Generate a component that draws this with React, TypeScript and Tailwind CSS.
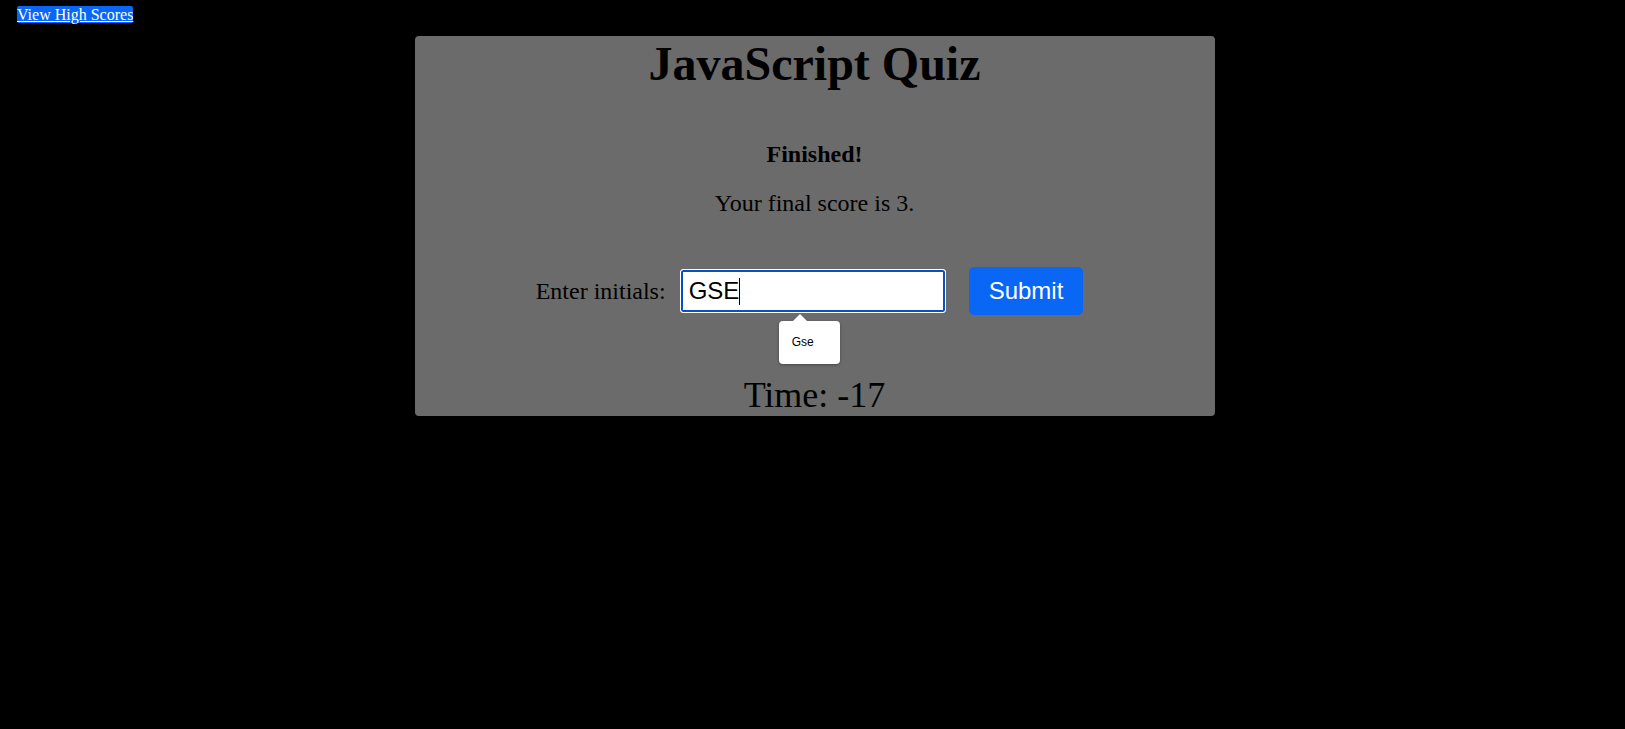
import React from 'react';

export default function App(): JSX.Element {
  const [initials] = React.useState<string>('GSE');

  return (
    <div className="min-h-screen w-full bg-black font-['Liberation_Serif','Times_New_Roman',serif] text-black">
      {/* Top link */}
      <div className="h-[36px] pt-[6px] pl-[17px] text-[16px] leading-[normal]">
        <a
          href="#"
          className="rounded-[2px] bg-[#0a66f5] text-white underline"
        >
          View High Scores
        </a>
      </div>

      {/* Quiz card */}
      <div className="mx-auto flex w-[800px] translate-x-[2px] flex-col items-center rounded-[4px] bg-[#6b6b6b]">
        <h1 className="text-[48px] font-bold leading-[normal]">JavaScript Quiz</h1>

        <h2 className="mt-[50px] text-[24px] font-bold leading-[normal]">Finished!</h2>
        <p className="mt-[22px] text-[24px] leading-[normal]">Your final score is {initials.length}.</p>

        <form
          className="relative mt-[50px] flex items-center justify-center pr-[10px]"
          onSubmit={(e) => e.preventDefault()}
        >
          <label htmlFor="initials" className="text-[24px] leading-[normal]">
            Enter initials:
          </label>
          <div
            id="initials"
            className="ml-[14px] flex h-[44px] w-[266px] items-center rounded-[3px] border border-white bg-white font-['Liberation_Sans',Arial,sans-serif] text-[24px] ring-2 ring-inset ring-[#0a4fc4]"
          >
            <span className="pl-[8px]">{initials}</span>
            <span className="h-[27px] w-px bg-black" />
          </div>
          <button
            type="submit"
            className="ml-[23px] h-[48px] rounded-[5px] bg-[#0a66f5] px-[20px] font-['Liberation_Sans',Arial,sans-serif] text-[24px] text-white"
          >
            Submit
          </button>

          {/* Autofill suggestion bubble */}
          <div className="absolute left-[243px] top-[54px] z-10 h-[43px] w-[61px] rounded-[4px] bg-white shadow-[0_1px_3px_rgba(0,0,0,0.35)]">
            <div className="absolute -top-[7px] left-[13px] h-0 w-0 border-x-[8px] border-b-[8px] border-x-transparent border-b-white" />
            <div className="pl-[13px] pt-[14px] font-['Liberation_Sans',Arial,sans-serif] text-[12px] leading-[normal]">
              Gse
            </div>
          </div>
        </form>

        <div className="mt-[59px] text-[36px] leading-[normal]">Time: -17</div>
      </div>
    </div>
  );
}
